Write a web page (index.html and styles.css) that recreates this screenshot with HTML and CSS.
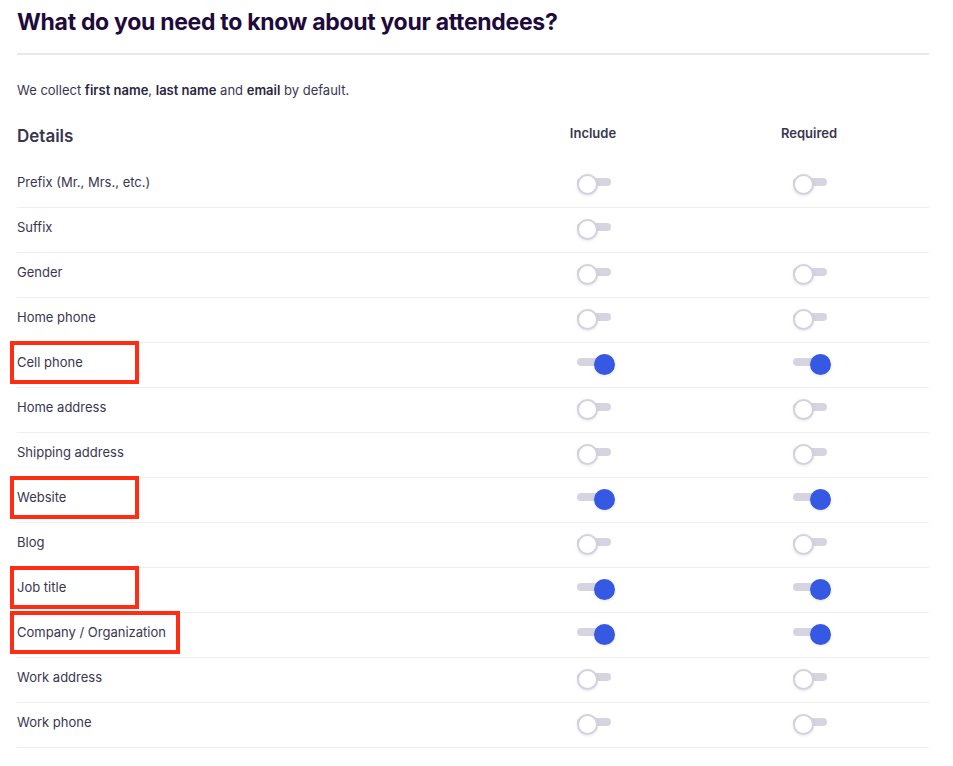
FILE: index.html
```html
<!DOCTYPE html>
<html>
<head>
<meta charset="utf-8">
<link rel="stylesheet" href="styles.css">
</head>
<body>
<div class="page">
  <h1 class="title">What do you need to know about your attendees?</h1>
  <p class="intro">We collect <b>first name</b>, <b>last name</b> and <b>email</b> by default.</p>
  <div class="table">
    <div class="head">
      <div class="h-details">Details</div>
      <div class="h-col">Include</div>
      <div class="h-col">Required</div>
    </div>
    <div class="row"><div class="label">Prefix (Mr., Mrs., etc.)</div><div class="cell"><span class="tg"></span></div><div class="cell"><span class="tg"></span></div></div>
    <div class="row"><div class="label">Suffix</div><div class="cell"><span class="tg"></span></div><div class="cell"></div></div>
    <div class="row"><div class="label">Gender</div><div class="cell"><span class="tg"></span></div><div class="cell"><span class="tg"></span></div></div>
    <div class="row"><div class="label">Home phone</div><div class="cell"><span class="tg"></span></div><div class="cell"><span class="tg"></span></div></div>
    <div class="row"><div class="label">Cell phone</div><div class="cell"><span class="tg on"></span></div><div class="cell"><span class="tg on"></span></div><span class="mark"></span></div>
    <div class="row"><div class="label">Home address</div><div class="cell"><span class="tg"></span></div><div class="cell"><span class="tg"></span></div></div>
    <div class="row"><div class="label">Shipping address</div><div class="cell"><span class="tg"></span></div><div class="cell"><span class="tg"></span></div></div>
    <div class="row"><div class="label">Website</div><div class="cell"><span class="tg on"></span></div><div class="cell"><span class="tg on"></span></div><span class="mark"></span></div>
    <div class="row"><div class="label">Blog</div><div class="cell"><span class="tg"></span></div><div class="cell"><span class="tg"></span></div></div>
    <div class="row"><div class="label">Job title</div><div class="cell"><span class="tg on"></span></div><div class="cell"><span class="tg on"></span></div><span class="mark"></span></div>
    <div class="row"><div class="label">Company / Organization</div><div class="cell"><span class="tg on"></span></div><div class="cell"><span class="tg on"></span></div><span class="mark wide"></span></div>
    <div class="row"><div class="label">Work address</div><div class="cell"><span class="tg"></span></div><div class="cell"><span class="tg"></span></div></div>
    <div class="row"><div class="label">Work phone</div><div class="cell"><span class="tg"></span></div><div class="cell"><span class="tg"></span></div></div>
  </div>
</div>
</body>
</html>
```

FILE: styles.css
```css
* { box-sizing: border-box; }
html, body { margin: 0; padding: 0; background: #fff; }
body {
  font-family: Inter, "Noto Sans", "Liberation Sans", sans-serif;
  color: #39364f;
}
.page {
  width: 929px;
  padding-left: 17px;
}
.title {
  margin: 0;
  padding-top: 7px;
  height: 55px;
  font-size: 23px;
  line-height: 30px;
  font-weight: 700;
  color: #1e0a3c;
  letter-spacing: -0.3px;
  border-bottom: 2px solid #e8e7ec;
}
.intro {
  margin: 0;
  padding-top: 26px;
  font-size: 13px;
  line-height: 18px;
  color: #39364f;
}
.intro b { font-weight: 600; color: #2a2740; }
.table { margin-top: 22px; }
.head {
  display: grid;
  grid-template-columns: 468px 216px 216px 1fr;
  height: 42px;
  align-items: start;
}
.h-details {
  font-size: 17px;
  line-height: 22px;
  font-weight: 600;
  color: #39364f;
  padding-top: 4px;
}
.h-col {
  text-align: center;
  font-size: 13px;
  line-height: 18px;
  font-weight: 600;
  color: #39364f;
  padding-top: 3px;
}
.row {
  position: relative;
  display: grid;
  grid-template-columns: 468px 216px 216px 1fr;
  height: 45px;
  padding-bottom: 3px;
  align-items: center;
  border-bottom: 1px solid #eeedf2;
}
.label {
  font-size: 13px;
  line-height: 18px;
  color: #39364f;
  padding-bottom: 3px;
}
.cell {
  display: flex;
  justify-content: center;
  padding-left: 1px;
  padding-bottom: 3px;
}
.tg {
  position: relative;
  display: block;
  width: 34px;
  height: 8px;
  border-radius: 4px;
  background: #d6d4e0;
}
.tg::after {
  content: "";
  position: absolute;
  left: 0;
  top: -4.5px;
  width: 17px;
  height: 17px;
  border-radius: 50%;
  background: #fff;
  border: 2px solid #d4d2df;
  box-shadow: 0 1px 3px rgba(30, 10, 60, 0.1);
}
.tg.on::after {
  left: 17px;
  background: #3659e3;
  border-color: #3659e3;
}
.mark {
  position: absolute;
  left: -7px;
  top: -2px;
  width: 129px;
  height: 43px;
  border: 4px solid #ff2d14;
  pointer-events: none;
}
.mark.wide { width: 170px; }
```
